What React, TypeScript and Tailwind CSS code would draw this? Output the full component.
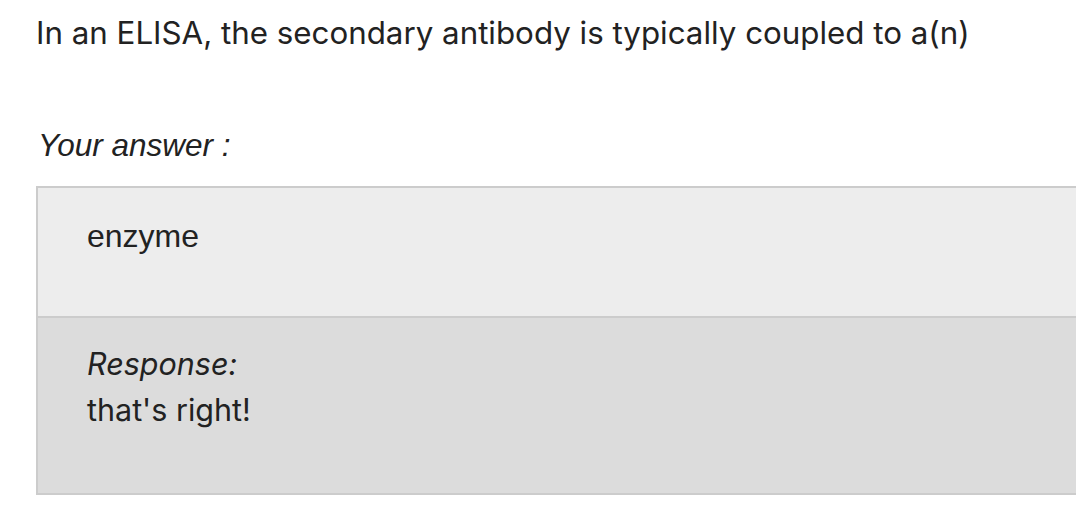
import React from "react";

const sans = "font-['Inter',sans-serif]";
const arial = "font-['Liberation_Sans',Arial,sans-serif]";

export default function App() {
  return (
    <div className="min-h-[516px] w-full overflow-hidden bg-white text-[#222]">
      <h1 className={`${sans} pl-9 pt-[15px] text-[31.3px] leading-[36px]`}>
        In an ELISA, the secondary antibody is typically coupled to a(n)
      </h1>

      <p className={`${arial} pl-[38px] pt-[76px] text-[31.5px] italic leading-[36px]`}>
        Your answer :
      </p>

      <div className="ml-9 mt-[23px] border-2 border-r-0 border-[#cccccc]">
        <div className={`${arial} h-[128px] bg-[#ededed] pl-[49px] pt-[30px] text-[32px] leading-[36px]`}>
          enzyme
        </div>
        <div className={`${sans} h-[177px] border-t-2 border-[#cccccc] bg-[#dcdcdc] pl-[49px] pt-[23px] text-[30.5px] leading-[46px]`}>
          <div className="italic">Response:</div>
          <div>that's right!</div>
        </div>
      </div>
    </div>
  );
}
